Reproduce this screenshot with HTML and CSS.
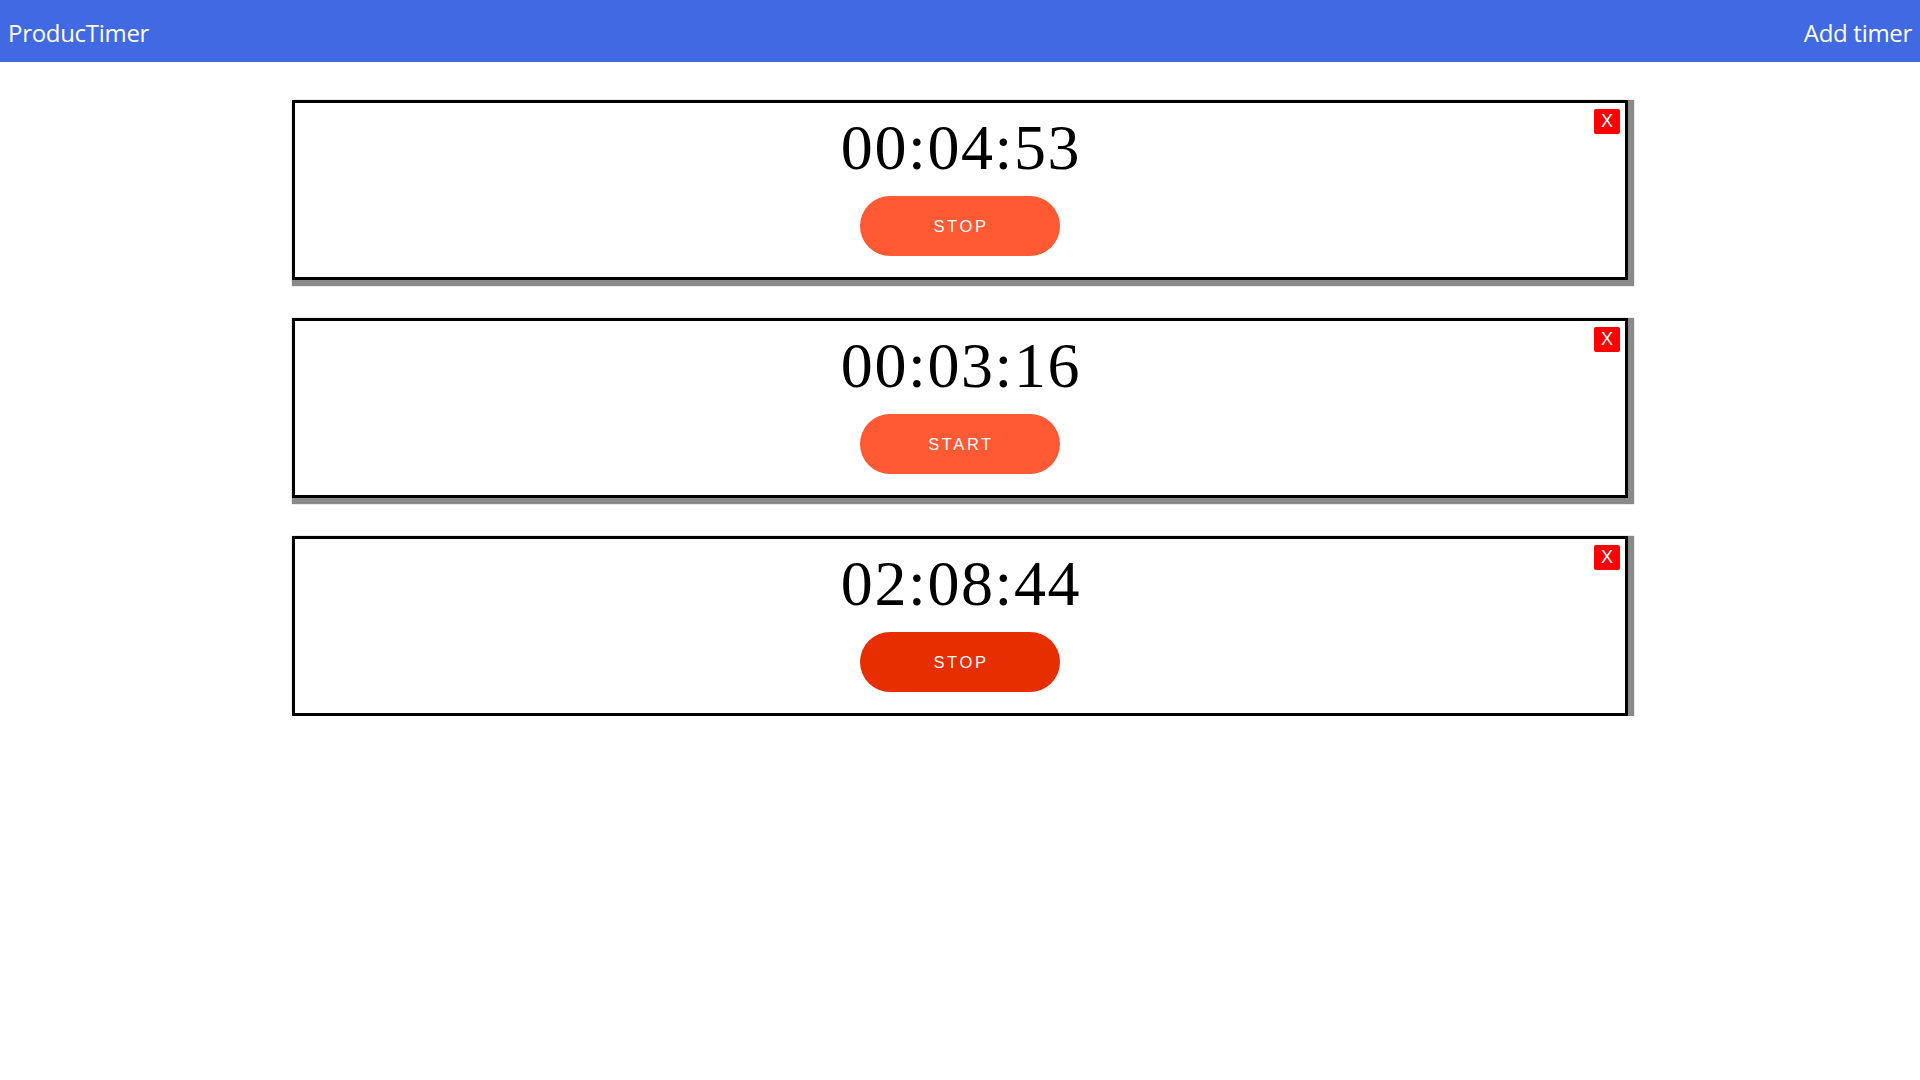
FILE: index.html
```html
<!DOCTYPE html>
<html lang="en">
<head>
<meta charset="utf-8">
<title>ProducTimer</title>
<link rel="stylesheet" href="styles.css">
</head>
<body>
<header class="topbar">
  <div class="brand">ProducTimer</div>
  <div class="add">Add timer</div>
</header>
<main class="timers">
  <section class="card">
    <button class="close">X</button>
    <div class="time">00:04:53</div>
    <button class="action">STOP</button>
  </section>
  <section class="card">
    <button class="close">X</button>
    <div class="time">00:03:16</div>
    <button class="action">START</button>
  </section>
  <section class="card">
    <button class="close">X</button>
    <div class="time">02:08:44</div>
    <button class="action dark">STOP</button>
  </section>
</main>
</body>
</html>
```
FILE: styles.css
```css
html, body {
  margin: 0;
  padding: 0;
  background: #ffffff;
}
.topbar {
  box-sizing: border-box;
  height: 62px;
  background: #4169e1;
  color: #ffffff;
  display: flex;
  align-items: center;
  justify-content: space-between;
  padding: 2px 8px 0;
  font-family: "Open Sans", "Noto Sans", sans-serif;
  font-size: 24px;
  letter-spacing: -0.3px;
}
.timers {
  padding-top: 38px;
  display: flex;
  flex-direction: column;
  align-items: center;
  gap: 38px;
}
.card {
  position: relative;
  box-sizing: border-box;
  width: 1336px;
  height: 180px;
  border: 3px solid #000000;
  background: #ffffff;
  box-shadow: 3px 3px 1px 3px #8a8a8a;
  padding: 9px 0 21px;
  display: flex;
  flex-direction: column;
  align-items: center;
}
.time {
  font-family: "Liberation Serif", "Times New Roman", serif;
  font-size: 64px;
  line-height: 72px;
  letter-spacing: 1.6px;
  padding-left: 2px;
  color: #000000;
  margin-bottom: 12px;
}
.action {
  width: 200px;
  height: 60px;
  border: none;
  border-radius: 30px;
  background: #ff5a33;
  color: #ffffff;
  font-family: "Liberation Sans", Arial, sans-serif;
  font-size: 16.5px;
  letter-spacing: 2.6px;
  padding: 0 0 0 2px;
  cursor: pointer;
}
.action.dark {
  background: #e62e00;
}
.close {
  position: absolute;
  top: 6px;
  right: 5px;
  width: 26px;
  height: 25px;
  border: none;
  border-radius: 2px;
  background: #ff0000;
  color: #ffffff;
  font-family: "Liberation Sans", Arial, sans-serif;
  font-size: 18px;
  padding: 0;
  line-height: 25px;
}
```
